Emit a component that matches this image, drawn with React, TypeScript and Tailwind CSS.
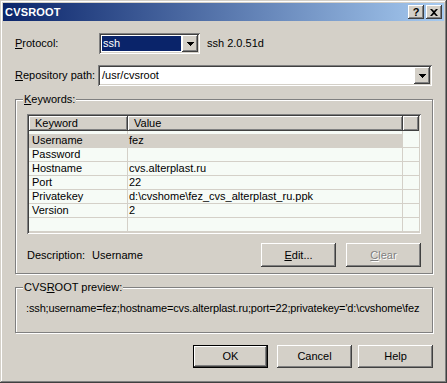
import React from "react";

const raised =
  "shadow-[inset_-1px_-1px_#404040,inset_1px_1px_#ffffff,inset_-2px_-2px_#808080,inset_2px_2px_#d4d0c8]";
const sunken =
  "shadow-[inset_1px_1px_#808080,inset_-1px_-1px_#ffffff,inset_2px_2px_#404040,inset_-2px_-2px_#d4d0c8]";
const etched = "border border-[#808080] shadow-[inset_1px_1px_#ffffff,1px_1px_#ffffff]";

const DownArrow = () => (
  <svg width="7" height="4" viewBox="0 0 7 4">
    <path d="M0 0h7v1H0zM1 1h5v1H1zM2 2h3v1H2zM3 3h1v1H3z" fill="#000" />
  </svg>
);

const DropButton = () => (
  <div className={`w-[16px] h-full flex items-center justify-center bg-[#d4d0c8] ${raised}`}>
    <DownArrow />
  </div>
);

const Combo = ({ value, selected, className }: { value: string; selected?: boolean; className: string }) => (
  <div className={`flex h-[21px] bg-white p-[2px] ${sunken} ${className}`}>
    <div className="flex-1 min-w-0 p-[1px]">
      <div className={`h-full flex items-center pl-[1px] ${selected ? "bg-[#0a246a] text-white" : "text-black"}`}>
        {value}
      </div>
    </div>
    <DropButton />
  </div>
);

const Button = ({ children, className = "", disabled, isDefault }: { children: React.ReactNode; className?: string; disabled?: boolean; isDefault?: boolean }) => (
  <div className={`w-[75px] flex ${isDefault ? "border border-black" : ""} ${className}`}>
    <div
      className={`flex-1 flex items-center justify-center bg-[#d4d0c8] ${raised} ${
        disabled ? "text-[#808080] [text-shadow:1px_1px_#ffffff]" : "text-black"
      }`}
    >
      {children}
    </div>
  </div>
);

const rows = [
  ["Username", "fez"],
  ["Password", ""],
  ["Hostname", "cvs.alterplast.ru"],
  ["Port", "22"],
  ["Privatekey", "d:\\cvshome\\fez_cvs_alterplast_ru.ppk"],
  ["Version", "2"],
  ["", ""],
];

const ListView = () => (
  <div className={`w-[394px] h-[120px] p-[2px] bg-[#f6fbf6] ${sunken}`}>
    <div className="flex h-[15px]">
      <div className={`w-[99px] bg-[#d4d0c8] pl-[6px] flex items-center ${raised}`}>Keyword</div>
      <div className={`w-[275px] bg-[#d4d0c8] pl-[6px] flex items-center ${raised}`}>Value</div>
      <div className={`flex-1 bg-[#d4d0c8] ${raised}`} />
    </div>
    <div className="h-[3px] flex">
      <div className="w-[99px] border-r border-[#d4d0c8]" />
      <div className="w-[275px] border-r border-[#d4d0c8]" />
    </div>
    {rows.map(([k, v], i) => (
      <div key={i} className="flex h-[14px]">
        <div className={`w-[374px] flex ${i === 0 ? "bg-[#d4d0c8]" : ""}`}>
          <div className="w-[99px] pl-[3px] border-r border-b border-[#d4d0c8] flex items-center leading-[13px]">{k}</div>
          <div className="w-[275px] pl-[1px] border-r border-b border-[#d4d0c8] flex items-center leading-[13px]">{v}</div>
        </div>
        <div className="flex-1 border-b border-[#d4d0c8]" />
      </div>
    ))}
  </div>
);

export default function App() {
  return (
    <div className="w-[447px] h-[383px] bg-[#d4d0c8] p-[3px] shadow-[inset_-1px_-1px_#404040,inset_1px_1px_#d4d0c8,inset_-2px_-2px_#808080,inset_2px_2px_#ffffff] font-['Liberation_Sans',Arial,sans-serif] text-[11px] text-black leading-[13px] overflow-hidden">
      {/* title bar */}
      <div className="h-[18px] flex items-center pl-[2px] pr-[2px] bg-linear-to-r/srgb from-[#0a246a] to-[#a6caf0]">
        <span className="text-white font-bold text-[11px] tracking-[0.2px]">CVSROOT</span>
        <div className="ml-auto flex items-center">
          <div className={`w-[16px] h-[14px] bg-[#d4d0c8] flex items-center justify-center font-bold text-[11px] leading-none ${raised}`}>
            ?
          </div>
          <div className={`ml-[2px] w-[16px] h-[14px] bg-[#d4d0c8] flex items-center justify-center ${raised}`}>
            <svg width="8" height="7" viewBox="0 0 8 7">
              <path d="M0 0h2l2 2 2-2h2L5 3.5 8 7H6L4 5 2 7H0l3-3.5z" fill="#000" />
            </svg>
          </div>
        </div>
      </div>

      <div className="pl-[12px] pr-[11px]">
        {/* protocol */}
        <div className="mt-[12px] h-[21px] flex items-center">
          <div className="w-[84px]">
            <u className="underline-offset-1">P</u>rotocol:
          </div>
          <Combo value="ssh" selected className="w-[101px]" />
          <div className="ml-[7px]">ssh 2.0.51d</div>
        </div>

        {/* repository */}
        <div className="mt-[11px] h-[21px] flex items-center">
          <div className="w-[83px]">
            <u className="underline-offset-1">R</u>epository path:
          </div>
          <Combo value="/usr/cvsroot" className="flex-1 mr-[1px]" />
        </div>

        {/* keywords group */}
        <div className={`relative mt-[13px] h-[175px] pl-[11px] pt-[14px] ${etched}`}>
          <div className="absolute left-[7px] top-[-7px] px-[1px] bg-[#d4d0c8]">
            <u className="underline-offset-1">K</u>eywords:
          </div>
          <ListView />
          <div className="mt-[9px] w-[394px] h-[24px] flex items-center">
            <span>Description:</span>
            <span className="ml-[7px]">Username</span>
            <Button className="ml-auto h-[24px]">
              <span>
                <u className="underline-offset-1">E</u>dit...
              </span>
            </Button>
            <Button className="ml-[10px] h-[24px]" disabled>
              <span>
                <u className="underline-offset-1">C</u>lear
              </span>
            </Button>
          </div>
        </div>

        {/* preview group */}
        <div className={`relative mt-[13px] h-[46px] pl-[10px] pt-[14px] ${etched}`}>
          <div className="absolute left-[7px] top-[-7px] px-[1px] bg-[#d4d0c8]">
            CVS<u className="underline-offset-1">R</u>OOT preview:
          </div>
          <div className="whitespace-nowrap tracking-[-0.14px]">
            :ssh;username=fez;hostname=cvs.alterplast.ru;port=22;privatekey='d:\cvshome\fez
          </div>
        </div>

        {/* buttons */}
        <div className="mt-[12px] h-[23px] flex justify-end">
          <Button isDefault className="h-[23px]">OK</Button>
          <Button className="ml-[9px] h-[23px]">Cancel</Button>
          <Button className="ml-[6px] h-[23px]">Help</Button>
        </div>
      </div>
    </div>
  );
}
